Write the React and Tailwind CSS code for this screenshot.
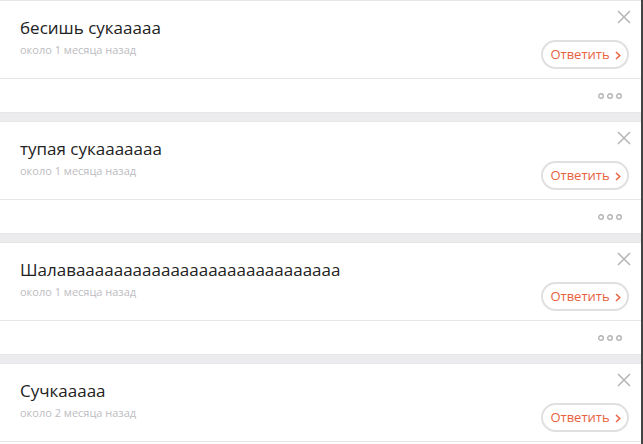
const posts = [
    { id: 1, text: 'бесишь сукааааа', time: 'около 1 месяца назад' },
    { id: 2, text: 'тупая сукааааааа', time: 'около 1 месяца назад' },
    { id: 3, text: 'Шалаваааааааааааааааааааааааааааа', time: 'около 1 месяца назад' },
    { id: 4, text: 'Сучкааааа', time: 'около 2 месяца назад' },
];

function Dots() {
    return (
        <svg width="24" height="6" viewBox="0 0 24 6" className="text-[#b4b4b4]">
            <circle cx="3" cy="3" r="2.3" fill="none" stroke="currentColor" strokeWidth="1.4" />
            <circle cx="12" cy="3" r="2.3" fill="none" stroke="currentColor" strokeWidth="1.4" />
            <circle cx="21" cy="3" r="2.3" fill="none" stroke="currentColor" strokeWidth="1.4" />
        </svg>
    );
}

function PostCard({ post }) {
    return (
        <div className="bg-white border-y border-[#e6e6e9]">
            {/* Header */}
            <div className="relative h-[77px] pl-5 pr-3">
                <div className="pt-[15px] text-[17px] leading-6 text-[#222]">{post.text}</div>
                <div className="mt-[2px] text-[11px] leading-4 text-[#bcbcbf]">{post.time}</div>
                <button className="absolute right-[10px] top-[9px] text-[#b5b5b5]">
                    <svg width="14" height="14" viewBox="0 0 14 14">
                        <path d="M1 1L13 13M13 1L1 13" stroke="currentColor" strokeWidth="1.5" fill="none" />
                    </svg>
                </button>
                <button className="absolute right-[12px] top-[39px] h-[29px] w-[88px] rounded-full border-2 border-[#e0e0e0] flex items-center justify-center gap-[5px] pl-[1px] text-[13px] text-[#e8623f]">
                    Ответить
                    <svg width="6" height="9" viewBox="0 0 6 9" className="mt-[1px]">
                        <path d="M1 1L4.8 4.5L1 8" stroke="currentColor" strokeWidth="1.5" fill="none" />
                    </svg>
                </button>
            </div>

            {/* Footer */}
            <div className="h-[34px] border-t border-[#e6e6e9] flex items-center justify-end pr-[19px]">
                <Dots />
            </div>
        </div>
    );
}

export default function App() {
    return (
        <div
            className="w-[643px] h-[444px] overflow-hidden bg-[#ececef] border-r-2 border-[#444]"
            style={{ fontFamily: '"Open Sans", "Noto Sans", sans-serif' }}
        >
            <div className="flex flex-col gap-[8px]">
                {posts.map(post => (
                    <PostCard key={post.id} post={post} />
                ))}
            </div>
        </div>
    );
}
